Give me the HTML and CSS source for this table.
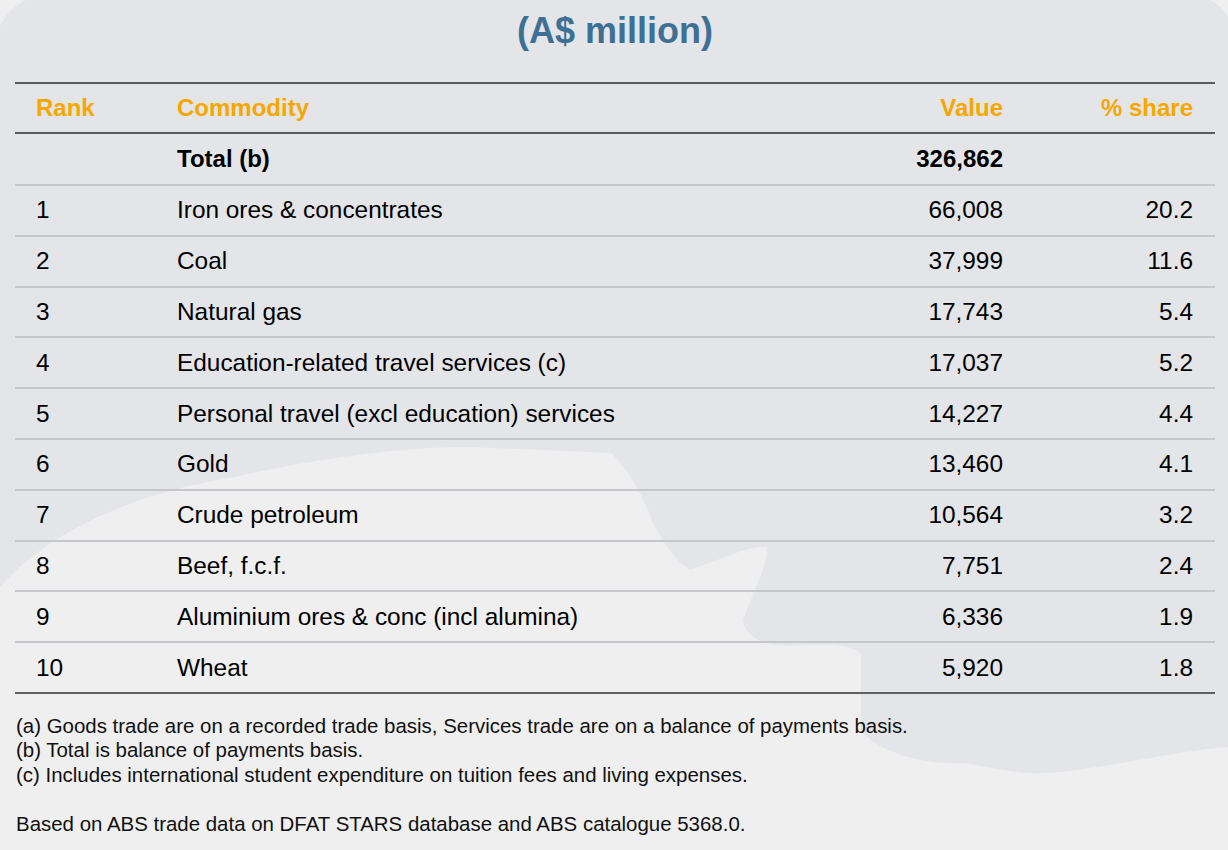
FILE: index.html
```html
<!DOCTYPE html>
<html lang="en">
<head>
<meta charset="utf-8">
<title>Top 10 exports (A$ million)</title>
<link rel="stylesheet" href="styles.css">
</head>
<body>
<svg class="backdrop" width="1228" height="850" viewBox="0 0 1228 850" aria-hidden="true">
  <path d="M0,587 C40,540 120,495 235,477 C330,455 420,446 470,447 L611,453 C630,470 645,500 653,523 C665,545 675,560 690,570 C720,560 750,545 767,547 C770,560 750,600 743,620 C745,640 770,648 800,645 C830,643 855,645 861,655 L861,730 C880,755 930,765 966,763 C1000,770 1030,775 1045,773 C1100,770 1180,750 1228,747 L1228,850 L0,850 Z" />
  <path d="M0,0 L26,0 C14,6 6,14 0,26 Z" />
  <path d="M1210,0 L1228,0 L1228,16 C1222,8 1216,3 1210,0 Z" />
</svg>
<main class="page">
  <h1 class="title">(A$ million)</h1>
  <div class="table">
    <div class="row head">
      <div class="c-rank">Rank</div>
      <div class="c-name">Commodity</div>
      <div class="c-val">Value</div>
      <div class="c-share">% share</div>
    </div>
    <div class="row total">
      <div class="c-rank"></div>
      <div class="c-name">Total (b)</div>
      <div class="c-val">326,862</div>
      <div class="c-share"></div>
    </div>
    <div class="row"><div class="c-rank">1</div><div class="c-name">Iron ores &amp; concentrates</div><div class="c-val">66,008</div><div class="c-share">20.2</div></div>
    <div class="row"><div class="c-rank">2</div><div class="c-name">Coal</div><div class="c-val">37,999</div><div class="c-share">11.6</div></div>
    <div class="row"><div class="c-rank">3</div><div class="c-name">Natural gas</div><div class="c-val">17,743</div><div class="c-share">5.4</div></div>
    <div class="row"><div class="c-rank">4</div><div class="c-name">Education-related travel services (c)</div><div class="c-val">17,037</div><div class="c-share">5.2</div></div>
    <div class="row"><div class="c-rank">5</div><div class="c-name">Personal travel (excl education) services</div><div class="c-val">14,227</div><div class="c-share">4.4</div></div>
    <div class="row"><div class="c-rank">6</div><div class="c-name">Gold</div><div class="c-val">13,460</div><div class="c-share">4.1</div></div>
    <div class="row"><div class="c-rank">7</div><div class="c-name">Crude petroleum</div><div class="c-val">10,564</div><div class="c-share">3.2</div></div>
    <div class="row"><div class="c-rank">8</div><div class="c-name">Beef, f.c.f.</div><div class="c-val">7,751</div><div class="c-share">2.4</div></div>
    <div class="row"><div class="c-rank">9</div><div class="c-name">Aluminium ores &amp; conc (incl alumina)</div><div class="c-val">6,336</div><div class="c-share">1.9</div></div>
    <div class="row last"><div class="c-rank">10</div><div class="c-name">Wheat</div><div class="c-val">5,920</div><div class="c-share">1.8</div></div>
  </div>
  <div class="notes">
    <p>(a) Goods trade are on a recorded trade basis, Services trade are on a balance of payments basis.</p>
    <p>(b) Total is balance of payments basis.</p>
    <p>(c) Includes international student expenditure on tuition fees and living expenses.</p>
    <p class="source">Based on ABS trade data on DFAT STARS database and ABS catalogue 5368.0.</p>
  </div>
</main>
</body>
</html>
```

FILE: styles.css
```css
html, body {
  margin: 0;
  padding: 0;
}

body {
  background: #e4e5e8;
  font-family: "Liberation Sans", Arial, Helvetica, sans-serif;
  color: #000;
  width: 1228px;
  height: 850px;
  overflow: hidden;
  position: relative;
}

.backdrop {
  position: absolute;
  left: 0;
  top: 0;
  z-index: 0;
  fill: #efefef;
}

.page {
  position: relative;
  z-index: 1;
  padding: 0 13px 0 15px;
}

.title {
  margin: 0;
  padding-top: 10px;
  height: 42px;
  line-height: 42px;
  font-size: 36px;
  font-weight: bold;
  color: #3e6f94;
  text-align: center;
}

.table {
  margin-top: 30px;
  width: 1200px;
}

.row {
  display: grid;
  grid-template-columns: 162px 1fr 200px 212px;
  align-items: center;
  box-sizing: border-box;
  height: 50.8px;
  border-bottom: 2px solid #c6c7ca;
  font-size: 24.4px;
  line-height: 28px;
}

.row.head {
  height: 52px;
  border-top: 2px solid #5a5b5e;
  border-bottom: 2px solid #5a5b5e;
  color: #f7a700;
  font-weight: bold;
  font-size: 24px;
}

.row.total {
  height: 52px;
  font-weight: bold;
  font-size: 24px;
}

.row.last {
  border-bottom: 2px solid #5f6062;
}

.c-rank {
  padding-left: 21px;
}

.c-val {
  text-align: right;
}

.c-share {
  text-align: right;
  padding-right: 22px;
}

.notes {
  margin-top: 20px;
  padding-left: 1px;
  font-size: 20.45px;
  line-height: 24.5px;
  color: #111;
}

.notes p {
  margin: 0;
}

.notes .source {
  margin-top: 24.5px;
}
```
